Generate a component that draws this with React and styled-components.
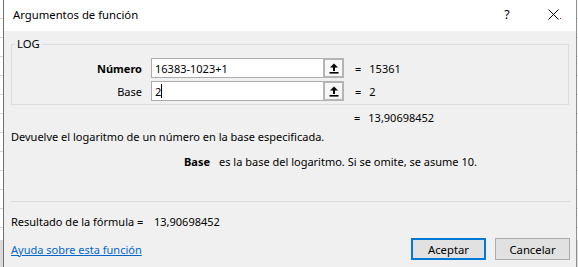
import styled, { createGlobalStyle } from 'styled-components';

const GlobalStyle = createGlobalStyle`
  html, body {
    margin: 0;
    padding: 0;
    height: 100%;
    overflow: hidden;
  }
  body {
    background-color: #fff;
    background-image:
      linear-gradient(to bottom, transparent 240px, #dadada 240px),
      repeating-linear-gradient(to bottom, transparent 0, transparent 18px, #d6d6d6 18px, #d6d6d6 19px);
    font-family: "Noto Sans", "Liberation Sans", sans-serif;
    font-size: 11px;
    color: #000;
  }
`;

const Dialog = styled.div`
  box-sizing: border-box;
  margin-left: 3px;
  width: 574px;
  height: 267px;
  display: flex;
  flex-direction: column;
  background: #f0f0f0;
  border-left: 1px solid #6f6f6f;
  border-right: 1px solid #8c8c8c;
  overflow: hidden;
`;

const TitleBar = styled.div`
  height: 31px;
  flex: none;
  display: flex;
  align-items: center;
  background: #fff;
  padding-left: 9px;
`;

const Title = styled.div`
  flex: 1;
  font-size: 11.3px;
  padding-bottom: 2px;
`;

const CaptionButton = styled.div`
  position: relative;
  width: ${(p) => p.$w || 46}px;
  height: 31px;
  display: flex;
  align-items: center;
  justify-content: center;
  font-size: 12.5px;
  padding-bottom: 3px;
  box-sizing: border-box;
`;

const RedDot = styled.span`
  position: absolute;
  left: 30px;
  top: 18px;
  width: 1px;
  height: 1px;
  background: #e81123;
`;

const Body = styled.div`
  flex: 1;
  display: flex;
  flex-direction: column;
  padding: 0 7px;
`;

const Group = styled.fieldset`
  margin: 6px 0 0;
  padding: 7px 0 3px 0;
  min-width: 0;
  border: 1px solid #dcdcdc;
  display: flex;
  flex-direction: column;
  gap: 3px;
`;

const Legend = styled.legend`
  margin-left: 3px;
  padding: 0 2px;
  font-size: 11.3px;
  line-height: 14px;
`;

const ArgRow = styled.div`
  display: flex;
  align-items: center;
  height: 20px;
`;

const ArgLabel = styled.div`
  width: 130px;
  text-align: right;
  font-weight: ${(p) => (p.$bold ? 700 : 400)};
`;

const InputBox = styled.div`
  margin-left: 9px;
  width: 193px;
  height: 20px;
  display: flex;
`;

const InputField = styled.div`
  flex: 1;
  box-sizing: border-box;
  border: 1px solid #acacac;
  border-right: none;
  background: #fff;
  padding-left: 3px;
  display: flex;
  align-items: center;
`;

const Caret = styled.span`
  display: inline-block;
  width: 1px;
  height: 14px;
  background: #000;
`;

const PickButton = styled.div`
  width: 21px;
  box-sizing: border-box;
  border: 2px solid #b4b4b4;
  background: #f7f7f7;
  display: flex;
  align-items: center;
  justify-content: center;
`;

const Eq = styled.span`
  margin-left: ${(p) => p.$ml ?? 11}px;
`;

const Value = styled.span`
  margin-left: 8px;
`;

const ResultLine = styled.div`
  margin-top: 6px;
  padding-left: 343px;
  line-height: 14px;
`;

const Description = styled.div`
  margin-top: ${(p) => p.$mt}px;
  padding-left: ${(p) => p.$pl || 0}px;
  line-height: 14px;
`;

const Bold = styled.b`
  margin-right: 9px;
`;

const Divider = styled.div`
  margin-top: 32px;
  margin-right: -2px;
  height: 1px;
  background: #dcdcdc;
`;

const FormulaLine = styled.div`
  margin-top: 13px;
  line-height: 14px;
  display: flex;
`;

const FormulaLabel = styled.span`
  width: 143px;
`;

const Footer = styled.div`
  margin-top: 9px;
  margin-right: -1px;
  display: flex;
  align-items: center;
`;

const HelpLink = styled.a`
  flex: 1;
  color: #0066cc;
  text-decoration: underline;
  cursor: pointer;
`;

const Button = styled.button`
  box-sizing: border-box;
  width: 75px;
  height: 22px;
  margin-left: ${(p) => p.$ml || 0}px;
  padding: 0;
  font-family: inherit;
  font-size: 11.3px;
  color: #000;
  background: #e1e1e1;
  border: ${(p) => (p.$primary ? '2px solid #0078d7' : '1px solid #adadad')};
`;

const UpArrow = () => (
  <svg width="10" height="11" viewBox="0 0 10 11">
    <path d="M5 0.5 L9 4.5 H6 V8 H4 V4.5 H1 Z" fill="#000" />
    <rect x="0.5" y="9" width="9" height="1.6" fill="#000" />
  </svg>
);

const CloseIcon = () => (
  <svg width="11" height="11" viewBox="0 0 11 11">
    <path d="M0.5 0.5 L10.5 10.5 M10.5 0.5 L0.5 10.5" stroke="#000" strokeWidth="1" />
  </svg>
);

export default function App() {
  return (
    <>
      <GlobalStyle />
      <Dialog>
        <TitleBar>
          <Title>Argumentos de función</Title>
          <CaptionButton $w={46}>?</CaptionButton>
          <CaptionButton $w={46}>
            <CloseIcon />
            <RedDot />
          </CaptionButton>
        </TitleBar>
        <Body>
          <Group>
            <Legend>LOG</Legend>
            <ArgRow>
              <ArgLabel $bold>Número</ArgLabel>
              <InputBox>
                <InputField>16383-1023+1</InputField>
                <PickButton><UpArrow /></PickButton>
              </InputBox>
              <Eq>=</Eq>
              <Value>15361</Value>
            </ArgRow>
            <ArgRow>
              <ArgLabel>Base</ArgLabel>
              <InputBox>
                <InputField>2<Caret /></InputField>
                <PickButton><UpArrow /></PickButton>
              </InputBox>
              <Eq>=</Eq>
              <Value>2</Value>
            </ArgRow>
          </Group>
          <ResultLine>
            <Eq $ml={0}>=</Eq>
            <Value>13,90698452</Value>
          </ResultLine>
          <Description $mt={5}>Devuelve el logaritmo de un número en la base especificada.</Description>
          <Description $mt={11} $pl={173}>
            <Bold>Base</Bold>es la base del logaritmo. Si se omite, se asume 10.
          </Description>
          <Divider />
          <FormulaLine>
            <FormulaLabel>Resultado de la fórmula =</FormulaLabel>
            <span>13,90698452</span>
          </FormulaLine>
          <Footer>
            <HelpLink>Ayuda sobre esta función</HelpLink>
            <Button $primary>Aceptar</Button>
            <Button $ml={9}>Cancelar</Button>
          </Footer>
        </Body>
      </Dialog>
    </>
  );
}
